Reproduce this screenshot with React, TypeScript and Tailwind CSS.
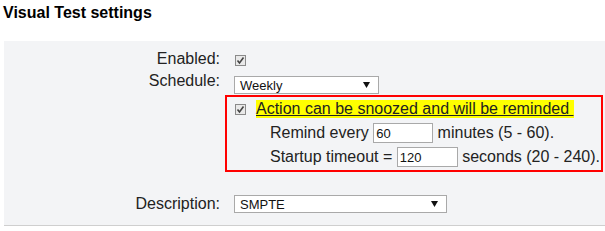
import React from 'react';

const font = { fontFamily: '"Liberation Sans", Arial, sans-serif' };

function CheckBox() {
  return (
    <svg width="11" height="11" viewBox="0 0 11 11" className="shrink-0">
      <rect x="0.5" y="0.5" width="10" height="10" fill="#e9e9e9" stroke="#8a8a8a" />
      <path d="M2.5 5.5 L4.5 8 L8.5 2.5" fill="none" stroke="#444" strokeWidth="1.6" />
    </svg>
  );
}

function Select({ value, width }: { value: string; width: string }) {
  return (
    <div
      className={`${width} h-[18px] bg-white border border-[#a9a9a9] flex items-center justify-between pl-[5px] pr-[8px] text-[13px] text-[#111] leading-none`}
    >
      <span>{value}</span>
      <svg width="7" height="6" viewBox="0 0 7 6">
        <path d="M0 0 H7 L3.5 6 Z" fill="#111" />
      </svg>
    </div>
  );
}

function NumInput({ value, width }: { value: string; width: string }) {
  return (
    <span
      className={`inline-flex ${width} h-[20px] bg-white border border-[#a9a9a9] items-center pl-[2px] text-[13px] text-[#111] leading-none align-middle`}
    >
      {value}
    </span>
  );
}

export default function App() {
  return (
    <div className="w-[605px] h-[231px] bg-white overflow-hidden text-[#222]" style={font}>
      {/* Title */}
      <h2 className="pl-[3px] pt-[4px] text-[16px] font-bold leading-[18px] text-black">
        Visual Test settings
      </h2>

      {/* Settings panel */}
      <div className="ml-[4px] mt-[19px] bg-[#f3f4f6] border-b border-[#cfcfcf] pt-[9px] pb-[12px] text-[16px] leading-[18px]">
        {/* Enabled */}
        <div className="flex items-center h-[18px]">
          <div className="w-[216px] text-right">Enabled:</div>
          <div className="pl-[15px] pt-[3px]">
            <CheckBox />
          </div>
        </div>

        {/* Schedule */}
        <div className="flex items-start mt-[4px]">
          <div className="w-[216px] text-right">Schedule:</div>
          <div className="pl-[14px] pt-[4px]">
            <Select value="Weekly" width="w-[145px]" />
          </div>
        </div>

        {/* Snooze options */}
        <div className="flex mt-[1px]">
          <div className="w-[221px] shrink-0" />
          <div className="w-[378px] border-2 border-[#ff0000] pt-[2px] pb-[3px] pl-[8px] flex flex-col gap-[4px]">
            <div className="flex items-center h-[20px]">
              <CheckBox />
              <span className="ml-[10px] bg-[#ffff00] underline">
                Action can be snoozed and will be reminded&nbsp;
              </span>
            </div>
            <div className="flex items-center h-[20px] pl-[35px] whitespace-pre">
              Remind every <NumInput value="60" width="w-[60px]" /> minutes (5 - 60).
            </div>
            <div className="flex items-center h-[20px] pl-[35px] whitespace-pre">
              Startup timeout = <NumInput value="120" width="w-[61px]" /> seconds (20 - 240).
            </div>
          </div>
        </div>

        {/* Description */}
        <div className="flex items-center mt-[23px]">
          <div className="w-[216px] text-right">Description:</div>
          <div className="pl-[14px]">
            <Select value="SMPTE" width="w-[213px]" />
          </div>
        </div>
      </div>
    </div>
  );
}
